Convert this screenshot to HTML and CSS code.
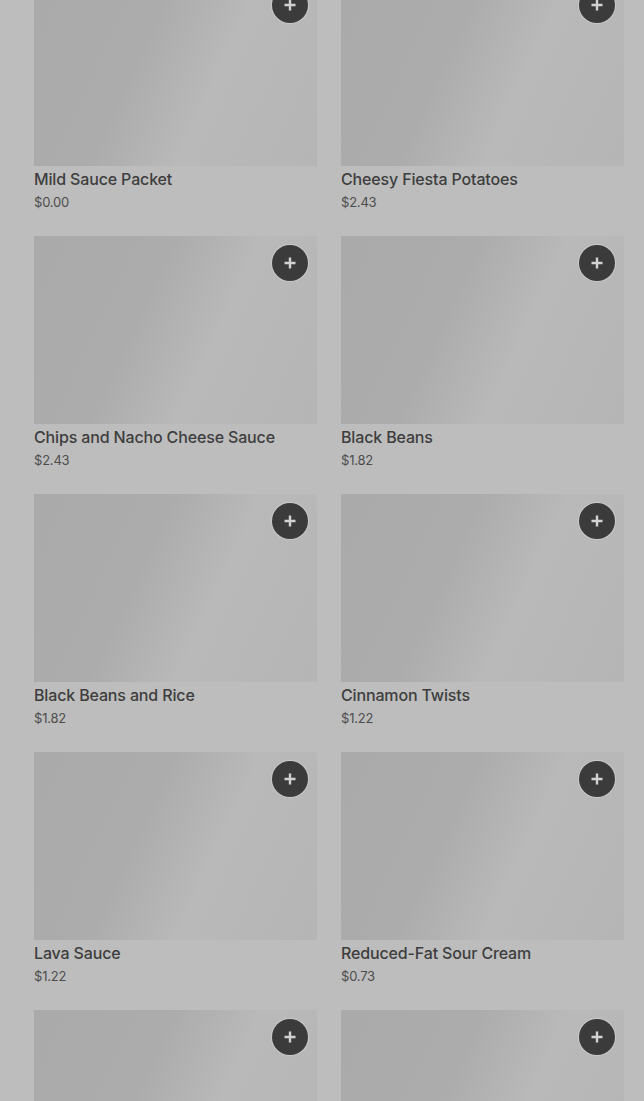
FILE: index.html
```html
<!DOCTYPE html>
<html lang="en">
<head>
    <meta charset="UTF-8">
    <meta name="viewport" content="width=device-width, initial-scale=1.0">
    <title>Menu</title>
    <link rel="stylesheet" href="styles.css">
</head>
<body>
    <div class="menu-grid">
        <div class="item">
            <div class="item-image"><button class="add-btn" aria-label="Add"><svg viewBox="0 0 14 14" width="14" height="14"><path d="M7 1.5v11M1.5 7h11" stroke="currentColor" stroke-width="2.4"/></svg></button></div>
            <div class="item-name">Mild Sauce Packet</div>
            <div class="item-price">$0.00</div>
        </div>
        <div class="item">
            <div class="item-image"><button class="add-btn" aria-label="Add"><svg viewBox="0 0 14 14" width="14" height="14"><path d="M7 1.5v11M1.5 7h11" stroke="currentColor" stroke-width="2.4"/></svg></button></div>
            <div class="item-name">Cheesy Fiesta Potatoes</div>
            <div class="item-price">$2.43</div>
        </div>
        <div class="item">
            <div class="item-image"><button class="add-btn" aria-label="Add"><svg viewBox="0 0 14 14" width="14" height="14"><path d="M7 1.5v11M1.5 7h11" stroke="currentColor" stroke-width="2.4"/></svg></button></div>
            <div class="item-name">Chips and Nacho Cheese Sauce</div>
            <div class="item-price">$2.43</div>
        </div>
        <div class="item">
            <div class="item-image"><button class="add-btn" aria-label="Add"><svg viewBox="0 0 14 14" width="14" height="14"><path d="M7 1.5v11M1.5 7h11" stroke="currentColor" stroke-width="2.4"/></svg></button></div>
            <div class="item-name">Black Beans</div>
            <div class="item-price">$1.82</div>
        </div>
        <div class="item">
            <div class="item-image"><button class="add-btn" aria-label="Add"><svg viewBox="0 0 14 14" width="14" height="14"><path d="M7 1.5v11M1.5 7h11" stroke="currentColor" stroke-width="2.4"/></svg></button></div>
            <div class="item-name">Black Beans and Rice</div>
            <div class="item-price">$1.82</div>
        </div>
        <div class="item">
            <div class="item-image"><button class="add-btn" aria-label="Add"><svg viewBox="0 0 14 14" width="14" height="14"><path d="M7 1.5v11M1.5 7h11" stroke="currentColor" stroke-width="2.4"/></svg></button></div>
            <div class="item-name">Cinnamon Twists</div>
            <div class="item-price">$1.22</div>
        </div>
        <div class="item">
            <div class="item-image"><button class="add-btn" aria-label="Add"><svg viewBox="0 0 14 14" width="14" height="14"><path d="M7 1.5v11M1.5 7h11" stroke="currentColor" stroke-width="2.4"/></svg></button></div>
            <div class="item-name">Lava Sauce</div>
            <div class="item-price">$1.22</div>
        </div>
        <div class="item">
            <div class="item-image"><button class="add-btn" aria-label="Add"><svg viewBox="0 0 14 14" width="14" height="14"><path d="M7 1.5v11M1.5 7h11" stroke="currentColor" stroke-width="2.4"/></svg></button></div>
            <div class="item-name">Reduced-Fat Sour Cream</div>
            <div class="item-price">$0.73</div>
        </div>
        <div class="item">
            <div class="item-image"><button class="add-btn" aria-label="Add"><svg viewBox="0 0 14 14" width="14" height="14"><path d="M7 1.5v11M1.5 7h11" stroke="currentColor" stroke-width="2.4"/></svg></button></div>
        </div>
        <div class="item">
            <div class="item-image"><button class="add-btn" aria-label="Add"><svg viewBox="0 0 14 14" width="14" height="14"><path d="M7 1.5v11M1.5 7h11" stroke="currentColor" stroke-width="2.4"/></svg></button></div>
        </div>
    </div>
</body>
</html>
```

FILE: styles.css
```css
html, body {
    margin: 0;
    padding: 0;
    overflow: hidden;
}
body {
    font-family: Inter, "Noto Sans", sans-serif;
    background-color: #bdbdbd;
    height: 1101px;
}
.menu-grid {
    display: grid;
    grid-template-columns: 283px 283px;
    column-gap: 24px;
    row-gap: 24px;
    padding: 0 20px 0 34px;
    margin-top: -22px;
}
.item-image {
    position: relative;
    height: 188px;
    background: linear-gradient(115deg, #aaaaaa 0%, #acacac 38%, #b9b9b9 62%, #b5b5b5 100%);
}
.add-btn {
    position: absolute;
    top: 9px;
    right: 9px;
    width: 36px;
    height: 36px;
    border-radius: 50%;
    border: none;
    padding: 0;
    background-color: #3b3b3b;
    color: #d2d2d2;
    display: flex;
    align-items: center;
    justify-content: center;
    box-shadow: 0 0 0 1px rgba(255,255,255,0.25);
}
.item-name {
    margin-top: 3px;
    font-size: 16px;
    font-weight: 500;
    line-height: 20px;
    letter-spacing: -0.15px;
    color: #3e3e3e;
}
.item-price {
    margin-top: 3px;
    font-size: 13px;
    line-height: 20px;
    letter-spacing: -0.2px;
    color: #4d4d4d;
}
```
